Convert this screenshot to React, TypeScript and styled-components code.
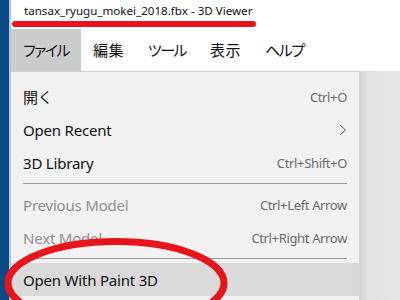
import React from "react";
import styled, { createGlobalStyle } from "styled-components";

const Global = createGlobalStyle`
  html, body { margin: 0; padding: 0; background: #ffffff; }
  body { width: 400px; height: 300px; overflow: hidden; }
`;

const UI = `"Noto Sans", "Noto Sans CJK JP", sans-serif`;

const Window = styled.div`
  position: relative;
  width: 400px;
  height: 300px;
  display: flex;
  overflow: hidden;
  font-family: ${UI};
`;

const Strip = styled.div`
  width: 9px;
  flex: none;
  background: #0b4a86;
  border-right: 2px solid #a9c8e6;
`;

const Main = styled.div`
  flex: 1;
  min-width: 0;
  display: flex;
  flex-direction: column;
  background: #ffffff;
`;

const TitleBar = styled.div`
  height: 29px;
  flex: none;
  display: grid;
  grid-template-columns: 13px auto 1fr;
  grid-template-rows: 18px 6px;
  row-gap: 3px;
`;

const Title = styled.div`
  grid-column: 2;
  grid-row: 1;
  align-self: end;
  font-size: 11.6px;
  line-height: 14px;
  color: #111;
  white-space: nowrap;
`;

const Underline = styled.div`
  grid-column: 1 / span 2;
  grid-row: 2;
  margin-left: 1px;
  width: 244px;
  height: 6px;
  border-radius: 3px;
  background: #e8141c;
`;

const MenuBar = styled.div`
  height: 42px;
  flex: none;
  display: flex;
`;

const MenuItem = styled.div<{ $active?: boolean; $kana?: boolean }>`
  display: flex;
  align-items: center;
  padding: 0 12px 2px;
  font-family: "Noto Sans CJK JP", sans-serif;
  font-size: 15px;
  font-feature-settings: "palt";
  letter-spacing: ${(p) => (p.$kana ? "-1.5px" : "0.5px")};
  color: #111;
  background: ${(p) => (p.$active ? "#cccccc" : "transparent")};
`;

const Body = styled.div`
  flex: 1;
  display: flex;
  min-height: 0;
`;

const Dropdown = styled.div`
  width: 348px;
  flex: none;
  background: #f2f2f2;
  border-top: 1px solid #cfcfcf;
  border-right: 1px solid #d6d6d6;
  padding-top: 8px;
  display: flex;
  flex-direction: column;
`;

const Row = styled.div<{ $disabled?: boolean; $hover?: boolean }>`
  height: 33px;
  flex: none;
  display: flex;
  align-items: center;
  justify-content: space-between;
  padding: 0 12px 0 12px;
  background: ${(p) => (p.$hover ? "#dadada" : "transparent")};
  color: ${(p) => (p.$disabled ? "#8f8f8f" : "#111111")};
`;

const Label = styled.span`
  font-size: 15px;
  letter-spacing: -0.2px;
  white-space: nowrap;
`;

const Shortcut = styled.span`
  font-size: 13px;
  letter-spacing: -0.35px;
  color: #6a6a6a;
  white-space: nowrap;
`;

const Separator = styled.div`
  height: 9px;
  flex: none;
  display: flex;
  align-items: center;
  padding: 0 12px;
  &::after {
    content: "";
    flex: 1;
    height: 1px;
    background: #9a9a9a;
  }
`;

const Canvas = styled.div`
  flex: 1;
  background: linear-gradient(90deg, #d3d3d3 0px, #e2e2e2 8px, #e6e6e6 100%);
`;

const Ellipse = styled.svg`
  position: absolute;
  left: 0;
  top: 230px;
  width: 240px;
  height: 80px;
  pointer-events: none;
`;

const Chevron = () => (
  <svg width="8" height="12" viewBox="0 0 8 12">
    <polyline points="1,1 6.5,6 1,11" fill="none" stroke="#555" strokeWidth="1" />
  </svg>
);

export default function App() {
  return (
    <>
      <Global />
      <Window>
        <Strip />
        <Main>
          <TitleBar>
            <Title>tansax_ryugu_mokei_2018.fbx - 3D Viewer</Title>
            <Underline />
          </TitleBar>
          <MenuBar>
            <MenuItem $active $kana>ファイル</MenuItem>
            <MenuItem>編集</MenuItem>
            <MenuItem $kana>ツール</MenuItem>
            <MenuItem>表示</MenuItem>
            <MenuItem $kana>ヘルプ</MenuItem>
          </MenuBar>
          <Body>
            <Dropdown>
              <Row>
                <Label>開く</Label>
                <Shortcut>Ctrl+O</Shortcut>
              </Row>
              <Row>
                <Label>Open Recent</Label>
                <Chevron />
              </Row>
              <Row>
                <Label>3D Library</Label>
                <Shortcut>Ctrl+Shift+O</Shortcut>
              </Row>
              <Separator />
              <Row $disabled>
                <Label>Previous Model</Label>
                <Shortcut>Ctrl+Left Arrow</Shortcut>
              </Row>
              <Row $disabled>
                <Label>Next Model</Label>
                <Shortcut>Ctrl+Right Arrow</Shortcut>
              </Row>
              <Separator />
              <Row $hover>
                <Label>Open With Paint 3D</Label>
              </Row>
            </Dropdown>
            <Canvas />
          </Body>
        </Main>
        <Ellipse viewBox="0 0 240 80">
          <ellipse cx="116" cy="53" rx="108" ry="41.5" fill="none" stroke="#e8141c" strokeWidth="7" />
        </Ellipse>
      </Window>
    </>
  );
}
